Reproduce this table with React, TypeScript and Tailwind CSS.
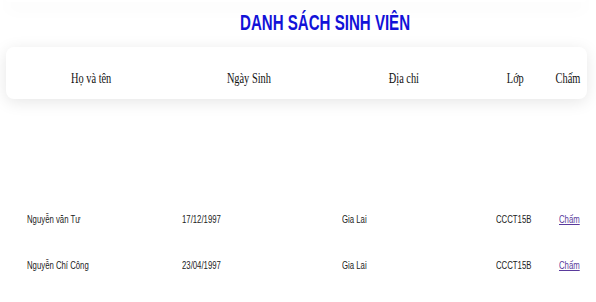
import React from "react";

const rows = [
  { name: "Nguyễn văn Tư", dob: "17/12/1997", addr: "Gia Lai", cls: "CCCT15B" },
  { name: "Nguyễn Chí Công", dob: "23/04/1997", addr: "Gia Lai", cls: "CCCT15B" },
];

const headers = [
  { label: "Họ và tên", w: "w-[170px]" },
  { label: "Ngày Sinh", w: "w-[146px]" },
  { label: "Địa chỉ", w: "w-[164px]" },
  { label: "Lớp", w: "w-[58px]" },
  { label: "Chấm", w: "w-[48px]" },
];

function D({ children, className = "" }: { children: React.ReactNode; className?: string }) {
  return (
    <span className={"inline-block origin-left scale-x-[0.74] whitespace-nowrap " + className}>
      {children}
    </span>
  );
}

export default function App() {
  return (
    <div className="w-[596px] h-[302px] bg-white overflow-hidden font-['Liberation_Sans',Arial,sans-serif]">
      <div className="ml-[6px] w-[580px] h-[2px] bg-white rounded-b-lg shadow-[0_4px_18px_rgba(0,0,0,0.12)]" />
      <div className="mt-[10px] h-[22px] flex justify-center pl-[54px]">
        <h1 className="inline-block origin-center scale-x-[0.685] whitespace-nowrap text-[22px] leading-[22px] font-bold text-[#1212d8]">
          DANH SÁCH SINH VIÊN
        </h1>
      </div>
      <div className="mt-[13px] ml-[6px] w-[581px] h-[52px] bg-white rounded-lg shadow-[0_3px_16px_rgba(0,0,0,0.10)] flex pt-[21px] font-['Liberation_Serif','Times_New_Roman',serif] text-[15px] leading-[20px] text-[#111]">
        {headers.map((h) => (
          <div key={h.label} className={h.w + " shrink-0 flex justify-center"}>
            <span className="inline-block origin-center scale-x-[0.69] whitespace-nowrap">{h.label}</span>
          </div>
        ))}
      </div>
      <div className="mt-[112px] text-[10.5px] leading-[16px] text-[#222]">
        {rows.map((r) => (
          <div key={r.name} className="h-[46px] flex pl-[27px]">
            <div className="w-[155px] shrink-0"><D>{r.name}</D></div>
            <div className="w-[160px] shrink-0"><D>{r.dob}</D></div>
            <div className="w-[154px] shrink-0"><D>{r.addr}</D></div>
            <div className="w-[63px] shrink-0"><D>{r.cls}</D></div>
            <div className="shrink-0">
              <a href="#" className="inline-block origin-left scale-x-[0.74] whitespace-nowrap text-[#5a3a9c] underline">
                Chấm
              </a>
            </div>
          </div>
        ))}
      </div>
    </div>
  );
}
